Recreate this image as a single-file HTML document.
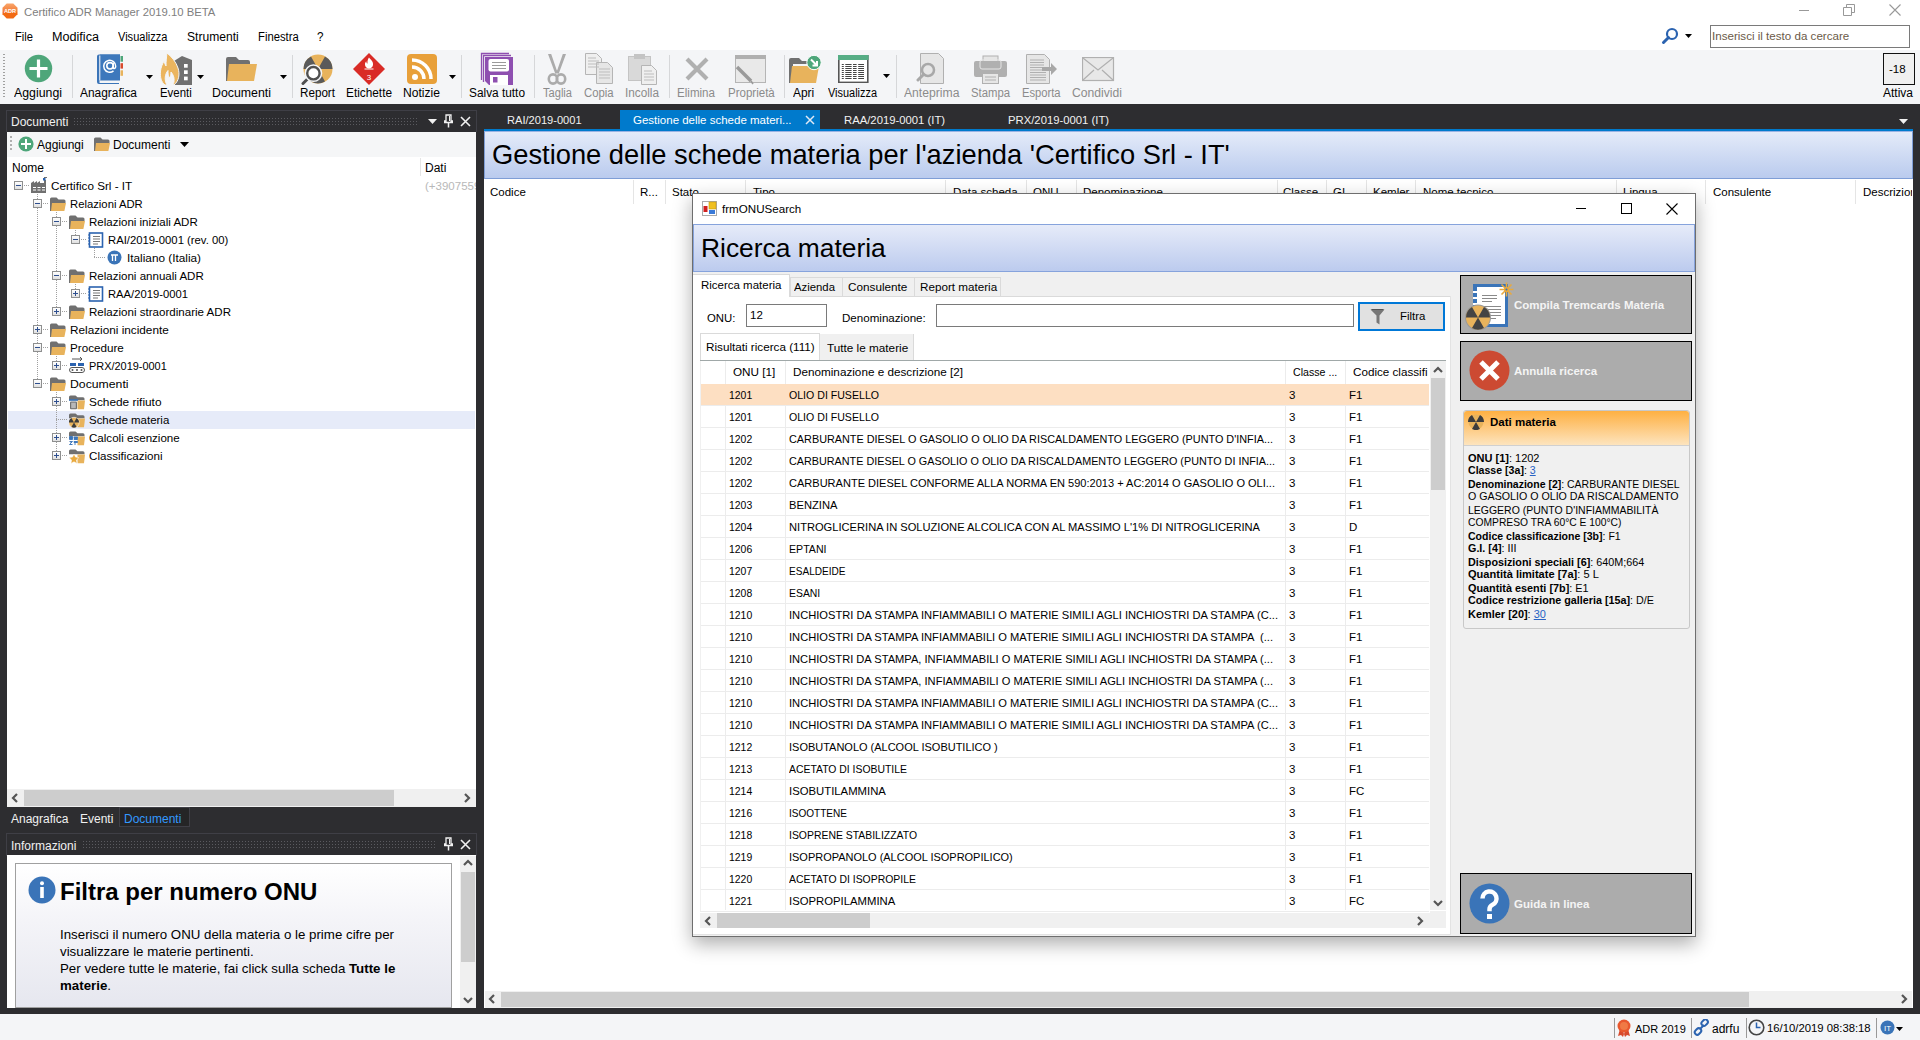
<!DOCTYPE html>
<html><head><meta charset="utf-8"><style>
html,body{margin:0;padding:0;width:1920px;height:1040px;overflow:hidden;background:#fff}
body{position:relative;font-family:"Liberation Sans",sans-serif}
body>div,body>svg{position:absolute}
.t{position:absolute;white-space:pre;line-height:1;font-family:"Liberation Sans",sans-serif}
</style></head><body>
<div style="left:0px;top:0px;width:1920px;height:50px;background:#fff"></div>
<svg style="position:absolute;left:2px;top:3px" width="16" height="16" viewBox="0 0 16 16"><defs><linearGradient id="adrg" x1="0" y1="0" x2="0" y2="1"><stop offset="0" stop-color="#f9a56a"/><stop offset=".55" stop-color="#f27a35"/><stop offset=".56" stop-color="#f26a14"/><stop offset="1" stop-color="#f26a14"/></linearGradient></defs><path d="M4.7 0.5h6.6l4.2 4.2v6.6l-4.2 4.2H4.7L0.5 11.3V4.7z" fill="url(#adrg)"/><text x="8" y="10.3" font-size="5.6" font-family="Liberation Sans" font-weight="700" fill="#fff" text-anchor="middle">ADR</text></svg>
<div class="t" style="left:24px;top:6.96px;font-size:11.3px;color:#808080;">Certifico ADR Manager 2019.10 BETA</div>
<div style="left:1799px;top:10px;width:10px;height:1px;background:#999"></div>
<svg style="position:absolute;left:1843px;top:4px" width="12" height="12" viewBox="0 0 12 12"><path d="M0.5 3.5h8v8h-8z M3.5 3.5v-3h8v8h-3" fill="none" stroke="#999" stroke-width="1"/></svg>
<svg style="position:absolute;left:1889px;top:4px" width="12" height="12" viewBox="0 0 12 12"><path d="M0.5 0.5L11.5 11.5M11.5 0.5L0.5 11.5" stroke="#999" stroke-width="1.1"/></svg>
<div class="t" style="left:15px;top:31.12px;font-size:12px;color:#000;transform:scaleX(0.9305);transform-origin:0 0;">File</div>
<div class="t" style="left:52px;top:31.12px;font-size:12px;color:#000;transform:scaleX(1.0517);transform-origin:0 0;">Modifica</div>
<div class="t" style="left:118px;top:31.12px;font-size:12px;color:#000;transform:scaleX(0.9199);transform-origin:0 0;">Visualizza</div>
<div class="t" style="left:187px;top:31.12px;font-size:12px;color:#000;transform:scaleX(1.0076);transform-origin:0 0;">Strumenti</div>
<div class="t" style="left:258px;top:31.12px;font-size:12px;color:#000;transform:scaleX(0.9398);transform-origin:0 0;">Finestra</div>
<div class="t" style="left:316.5px;top:31.12px;font-size:12px;color:#000;transform:scaleX(0.9720);transform-origin:0 0;">?</div>
<svg style="position:absolute;left:1661px;top:27px" width="18" height="18" viewBox="0 0 18 18"><circle cx="11" cy="7" r="5" fill="none" stroke="#2b63b0" stroke-width="2.2"/><path d="M7.5 10.5L2.5 15.5" stroke="#2b63b0" stroke-width="3" stroke-linecap="round"/></svg>
<svg style="position:absolute;left:1685px;top:34px" width="7" height="4" viewBox="0 0 7 4"><path d="M0 0H7L3.5 4Z" fill="#000"/></svg>
<div style="left:1710px;top:25px;width:200px;height:23px;background:#fff;border:1px solid #7a7a7a;box-sizing:border-box"></div>
<div class="t" style="left:1712px;top:29.52px;font-size:11.6px;color:#6b5a48;">Inserisci il testo da cercare</div>
<div style="left:0px;top:50px;width:1920px;height:54px;background:#f4f5f7"></div>
<div style="left:3px;top:54px;width:2px;height:1px;background:#a0a0a0"></div>
<div style="left:3px;top:57px;width:2px;height:1px;background:#a0a0a0"></div>
<div style="left:3px;top:60px;width:2px;height:1px;background:#a0a0a0"></div>
<div style="left:3px;top:63px;width:2px;height:1px;background:#a0a0a0"></div>
<div style="left:3px;top:66px;width:2px;height:1px;background:#a0a0a0"></div>
<div style="left:3px;top:69px;width:2px;height:1px;background:#a0a0a0"></div>
<div style="left:3px;top:72px;width:2px;height:1px;background:#a0a0a0"></div>
<div style="left:3px;top:75px;width:2px;height:1px;background:#a0a0a0"></div>
<div style="left:3px;top:78px;width:2px;height:1px;background:#a0a0a0"></div>
<div style="left:3px;top:81px;width:2px;height:1px;background:#a0a0a0"></div>
<div style="left:3px;top:84px;width:2px;height:1px;background:#a0a0a0"></div>
<div style="left:3px;top:87px;width:2px;height:1px;background:#a0a0a0"></div>
<div style="left:3px;top:90px;width:2px;height:1px;background:#a0a0a0"></div>
<div style="left:3px;top:93px;width:2px;height:1px;background:#a0a0a0"></div>
<div style="left:3px;top:96px;width:2px;height:1px;background:#a0a0a0"></div>
<div style="left:72px;top:55px;width:1px;height:43px;background:#d6d7d9"></div>
<div style="left:292px;top:55px;width:1px;height:43px;background:#d6d7d9"></div>
<div style="left:461px;top:55px;width:1px;height:43px;background:#d6d7d9"></div>
<div style="left:534px;top:55px;width:1px;height:43px;background:#d6d7d9"></div>
<div style="left:669px;top:55px;width:1px;height:43px;background:#d6d7d9"></div>
<div style="left:784px;top:55px;width:1px;height:43px;background:#d6d7d9"></div>
<div style="left:896px;top:55px;width:1px;height:43px;background:#d6d7d9"></div>
<svg style="position:absolute;left:24px;top:54px" width="29" height="29" viewBox="0 0 29 29"><circle cx="14.5" cy="14.5" r="13.7" fill="#4ea67a"/><path d="M14.5 5.5v18M5.5 14.5h18" stroke="#fff" stroke-width="3.2"/></svg>
<div class="t" style="left:14.25px;top:87.12px;font-size:12px;color:#000;transform:scaleX(1.0274);transform-origin:0 0;">Aggiungi</div>
<svg style="position:absolute;left:96px;top:54px" width="28" height="30" viewBox="0 0 28 30"><path d="M1 2.5a2 2 0 0 1 2-2h21v26H3.5v2.5H23v1H3a2 2 0 0 1-2-2z" fill="#3a74b8"/><rect x="4" y="0.5" width="20" height="25.5" fill="#3d78bc"/><rect x="3.3" y="1.5" width="1" height="25" fill="#fff"/><rect x="24.5" y="2" width="2.5" height="5.7" fill="#4ea67a"/><rect x="24.5" y="9.2" width="2.5" height="5.4" fill="#d84a2d"/><rect x="24.5" y="16.3" width="2.5" height="5.5" fill="#e8b35c"/><circle cx="14" cy="11.8" r="3.2" fill="none" stroke="#fff" stroke-width="1.6"/><path d="M17.2 9v4.5c0 1.5 2.5 1.5 2.5-1.2a6 6 0 1 0-2.2 4.6" fill="none" stroke="#fff" stroke-width="1.5"/></svg>
<div class="t" style="left:80px;top:87.12px;font-size:12px;color:#000;transform:scaleX(0.9935);transform-origin:0 0;">Anagrafica</div>
<svg style="position:absolute;left:146px;top:75px" width="7" height="4" viewBox="0 0 7 4"><path d="M0 0H7L3.5 4Z" fill="#000"/></svg>
<svg style="position:absolute;left:159px;top:52px" width="34" height="34" viewBox="0 0 34 34"><path d="M15 9L23 4L33 8V33H15Z" fill="#707070"/><rect x="25" y="12" width="3.7" height="3.7" fill="#fff"/><rect x="25" y="18.3" width="3.7" height="3.7" fill="#fff"/><rect x="25" y="24.6" width="3.7" height="3.7" fill="#fff"/><path d="M6 33C2 30 1 25 1.5 19C2 15 3.5 12 5 9C5.5 11 6 12.5 7 14C7 9 7.5 5 8 1C13 5 17 10 19 16C21 22 20 29 15 33L14 33C16 29 15.5 24 12 20C12 23 11.5 25 10 26C9 23 9 21 9 18.5C6 22 5 28 8 33Z" fill="#ebb55f" stroke="#f4f5f7" stroke-width="1"/></svg>
<div class="t" style="left:160px;top:87.12px;font-size:12px;color:#000;transform:scaleX(0.9518);transform-origin:0 0;">Eventi</div>
<svg style="position:absolute;left:197px;top:75px" width="7" height="4" viewBox="0 0 7 4"><path d="M0 0H7L3.5 4Z" fill="#000"/></svg>
<svg style="position:absolute;left:226px;top:57px" width="32" height="25" viewBox="0 0 32 25"><path d="M0 3V2a2 2 0 0 1 2-2h8l3 3h9a2 2 0 0 1 2 2v3H0z M0 3h4v21H0z" fill="#707070"/><path d="M3 7h28l-3 17H1z" fill="#e8b35c"/></svg>
<div class="t" style="left:212px;top:87.12px;font-size:12px;color:#000;transform:scaleX(1.0286);transform-origin:0 0;">Documenti</div>
<svg style="position:absolute;left:280px;top:75px" width="7" height="4" viewBox="0 0 7 4"><path d="M0 0H7L3.5 4Z" fill="#000"/></svg>
<svg style="position:absolute;left:301px;top:54px" width="32" height="31" viewBox="0 0 32 31"><circle cx="17" cy="15" r="14.5" fill="#e8b35c"/><path d="M17 15L10 2.5A14.5 14.5 0 0 0 2.5 15z M17 15L24 2.5A14.5 14.5 0 0 1 31.5 15z M17 15l7 12.5a14.5 14.5 0 0 1-14 0z" fill="#5a5a5a"/><path d="M7.5 24L2 29.5" stroke="#505050" stroke-width="3" stroke-linecap="round"/><circle cx="12.4" cy="19.2" r="6.6" fill="#fff" stroke="#f4f5f7" stroke-width="4.6"/><circle cx="12.4" cy="19.2" r="6.2" fill="#fff" stroke="#505050" stroke-width="2.4"/></svg>
<div class="t" style="left:300px;top:87.12px;font-size:12px;color:#000;transform:scaleX(0.9714);transform-origin:0 0;">Report</div>
<svg style="position:absolute;left:353px;top:53px" width="32" height="32" viewBox="0 0 32 32"><path d="M16 0L32 16L16 32L0 16z" fill="#d92b26"/><text x="16" y="27" font-size="8" font-family="Liberation Sans" fill="#fff" text-anchor="middle">3</text><path d="M16 4.5c2 2.5 4.5 4 4 7.5-.4 2.2-2 3.5-4 3.5s-3.6-1.3-4-3.5c-.3-1.8.6-3 1.3-3.8 0 1.5.7 2.3 1.2 2.3-.2-2.5.3-4.4 1.5-6z" fill="#fff"/><path d="M11.5 16h9" stroke="#fff" stroke-width="1"/></svg>
<div class="t" style="left:346px;top:87.12px;font-size:12px;color:#000;transform:scaleX(0.9849);transform-origin:0 0;">Etichette</div>
<svg style="position:absolute;left:407px;top:54px" width="30" height="30" viewBox="0 0 30 30"><rect x="0" y="0" width="30" height="30" rx="4" fill="#e8a03a"/><circle cx="8" cy="23" r="3" fill="#fff"/><path d="M5 13a12 12 0 0 1 12 12M5 6a19 19 0 0 1 19 19" fill="none" stroke="#fff" stroke-width="3.5"/></svg>
<div class="t" style="left:403px;top:87.12px;font-size:12px;color:#000;transform:scaleX(1.0085);transform-origin:0 0;">Notizie</div>
<svg style="position:absolute;left:449px;top:75px" width="7" height="4" viewBox="0 0 7 4"><path d="M0 0H7L3.5 4Z" fill="#000"/></svg>
<svg style="position:absolute;left:480px;top:52px" width="34" height="34" viewBox="0 0 34 34"><path d="M1.5 28V1.5H29" fill="none" stroke="#8e4fb0" stroke-width="1.3"/><path d="M3.5 30V3.5H31" fill="none" stroke="#8e4fb0" stroke-width="1.3"/><path d="M5 5H33V33H9L5 29Z" fill="#8e4fb0"/><rect x="8.5" y="7" width="20.5" height="12.5" rx="2" fill="#fff"/><path d="M12 10.5h14M12 13.5h14M12 16.5h14" stroke="#9a9a9a" stroke-width="1"/><rect x="10" y="23" width="18" height="10" fill="#fff"/><rect x="13" y="25" width="4.5" height="5.5" fill="#8e4fb0"/></svg>
<div class="t" style="left:469px;top:87.12px;font-size:12px;color:#000;transform:scaleX(0.9876);transform-origin:0 0;">Salva tutto</div>
<svg style="position:absolute;left:546px;top:53px" width="22" height="32" viewBox="0 0 22 32"><path d="M2 1h3.2l6 17.5-2 2z M20 1h-3.2l-6 17.5 2 2z" fill="#ababab"/><rect x="9" y="17.5" width="4" height="3" fill="#ababab"/><ellipse cx="7" cy="26" rx="4.2" ry="4.6" fill="none" stroke="#ababab" stroke-width="2.6"/><ellipse cx="15" cy="26" rx="4.2" ry="4.6" fill="none" stroke="#ababab" stroke-width="2.6"/></svg>
<div class="t" style="left:542.5px;top:87.12px;font-size:12px;color:#8b8b8b;transform:scaleX(0.9248);transform-origin:0 0;">Taglia</div>
<svg style="position:absolute;left:585px;top:53px" width="29" height="31" viewBox="0 0 29 31"><path d="M0.5 0.5h11l5 5v16h-16z" fill="#efefef" stroke="#b5b5b5"/><path d="M11.5 9.5h11l5 5v16h-16z" fill="#e6e6e6" stroke="#b5b5b5"/><path d="M3 5h8M3 8h11M3 11h11M3 14h11M14 16h11M14 19h11M14 22h11M14 25h11" stroke="#bdbdbd"/></svg>
<div class="t" style="left:583.6px;top:87.12px;font-size:12px;color:#8b8b8b;transform:scaleX(0.9439);transform-origin:0 0;">Copia</div>
<svg style="position:absolute;left:628px;top:53px" width="30" height="32" viewBox="0 0 30 32"><rect x="0.5" y="3.5" width="22" height="24" fill="#d9d9d9" stroke="#c4c4c4"/><rect x="6" y="1" width="11" height="5" fill="#c4c4c4"/><path d="M13.5 12.5h10l5 5v14h-15z" fill="#efefef" stroke="#b5b5b5"/><path d="M16 18h8M16 21h10M16 24h10M16 27h10" stroke="#bdbdbd"/></svg>
<div class="t" style="left:625.4px;top:87.12px;font-size:12px;color:#8b8b8b;transform:scaleX(0.9802);transform-origin:0 0;">Incolla</div>
<svg style="position:absolute;left:685px;top:57px" width="24" height="24" viewBox="0 0 24 24"><path d="M2 2L22 22M22 2L2 22" stroke="#b0b0b0" stroke-width="4.2"/></svg>
<div class="t" style="left:677.4px;top:87.12px;font-size:12px;color:#8b8b8b;transform:scaleX(0.9655);transform-origin:0 0;">Elimina</div>
<svg style="position:absolute;left:735px;top:55px" width="32" height="30" viewBox="0 0 32 30"><rect x="0.5" y="0.5" width="30" height="27" fill="#e9e9e9" stroke="#b5b5b5"/><rect x="0" y="0" width="31" height="4" fill="#b0b0b0"/><path d="M2 12l14 14" stroke="#9a9a9a" stroke-width="3.5"/><path d="M16 26l2 3" stroke="#9a9a9a" stroke-width="1.5"/></svg>
<div class="t" style="left:727.5px;top:87.12px;font-size:12px;color:#8b8b8b;transform:scaleX(0.9609);transform-origin:0 0;">Proprietà</div>
<svg style="position:absolute;left:789px;top:55px" width="33" height="29" viewBox="0 0 33 29"><path d="M0 6V5a2 2 0 0 1 2-2h8l3 3h8v3H0z M0 6h4v22H0z" fill="#707070"/><path d="M3 11h27l-3 17H1z" fill="#e8b35c"/><circle cx="25" cy="7.5" r="7.2" fill="#4ea67a" stroke="#fff" stroke-width="1"/><path d="M22 4.5l6 6M28 6v4.5h-4.5" fill="none" stroke="#fff" stroke-width="2"/></svg>
<div class="t" style="left:793px;top:87.12px;font-size:12px;color:#000;transform:scaleX(0.9933);transform-origin:0 0;">Apri</div>
<svg style="position:absolute;left:838px;top:55px" width="31" height="28" viewBox="0 0 31 28"><rect x="0.8" y="0.8" width="29" height="26.6" fill="#fff" stroke="#555" stroke-width="1.6"/><rect x="0" y="0" width="30.6" height="5" fill="#56ad85"/><path d="M3.8 9.5h2M7.3 9.5h6.3M15 9.5h3.6M20.2 9.5h5.8" stroke="#444" stroke-width="1.1"/><path d="M3.8 11.5h2M7.3 11.5h6.3M15 11.5h3.6M20.2 11.5h5.8" stroke="#444" stroke-width="1.1"/><path d="M3.8 13.5h2M7.3 13.5h6.3M15 13.5h3.6M20.2 13.5h5.8" stroke="#444" stroke-width="1.1"/><path d="M3.8 15.5h2M7.3 15.5h6.3M15 15.5h3.6M20.2 15.5h5.8" stroke="#444" stroke-width="1.1"/><path d="M3.8 17.5h2M7.3 17.5h6.3M15 17.5h3.6M20.2 17.5h5.8" stroke="#444" stroke-width="1.1"/><path d="M3.8 19.5h2M7.3 19.5h6.3M15 19.5h3.6M20.2 19.5h5.8" stroke="#444" stroke-width="1.1"/><path d="M3.8 21.5h2M7.3 21.5h6.3M15 21.5h3.6M20.2 21.5h5.8" stroke="#444" stroke-width="1.1"/><path d="M3.8 23.5h2M7.3 23.5h6.3M15 23.5h3.6M20.2 23.5h5.8" stroke="#444" stroke-width="1.1"/></svg>
<div class="t" style="left:828.3px;top:87.12px;font-size:12px;color:#000;transform:scaleX(0.9106);transform-origin:0 0;">Visualizza</div>
<svg style="position:absolute;left:883px;top:74px" width="7" height="4" viewBox="0 0 7 4"><path d="M0 0H7L3.5 4Z" fill="#000"/></svg>
<svg style="position:absolute;left:916px;top:53px" width="29" height="31" viewBox="0 0 29 31"><path d="M4.5 0.5h18l5 5v25h-23z" fill="#e6e6e6" stroke="#b0b0b0"/><circle cx="12" cy="17" r="6" fill="#e6e6e6" stroke="#a8a8a8" stroke-width="2.5"/><path d="M7.5 21.5L2 27" stroke="#a8a8a8" stroke-width="3" stroke-linecap="round"/></svg>
<div class="t" style="left:904.3px;top:87.12px;font-size:12px;color:#8b8b8b;transform:scaleX(1.0127);transform-origin:0 0;">Anteprima</div>
<svg style="position:absolute;left:974px;top:55px" width="33" height="29" viewBox="0 0 33 29"><rect x="9" y="1" width="15" height="6" fill="#e6e6e6" stroke="#b0b0b0"/><rect x="0" y="6" width="33" height="16" rx="2" fill="#b0b0b0"/><rect x="6" y="5" width="21" height="9" rx="2" fill="none" stroke="#e6e6e6"/><rect x="8.5" y="18.5" width="16" height="10" fill="#e6e6e6" stroke="#b0b0b0"/><path d="M11 22h11M11 25h11" stroke="#b0b0b0"/></svg>
<div class="t" style="left:971px;top:87.12px;font-size:12px;color:#8b8b8b;transform:scaleX(0.9430);transform-origin:0 0;">Stampa</div>
<svg style="position:absolute;left:1026px;top:54px" width="32" height="30" viewBox="0 0 32 30"><path d="M0.5 0.5h18l5 5v24h-23z" fill="#e6e6e6" stroke="#b0b0b0"/><path d="M4 6.0h14" stroke="#b0b0b0"/><path d="M4 8.5h14" stroke="#b0b0b0"/><path d="M4 11.0h14" stroke="#b0b0b0"/><path d="M4 13.5h14" stroke="#b0b0b0"/><path d="M4 16.0h16" stroke="#b0b0b0"/><path d="M4 18.5h16" stroke="#b0b0b0"/><path d="M4 21.0h16" stroke="#b0b0b0"/><path d="M4 23.5h16" stroke="#b0b0b0"/><path d="M4 26.0h16" stroke="#b0b0b0"/><path d="M16 13h9v-4l6 6-6 6v-4h-9z" fill="#a8a8a8"/></svg>
<div class="t" style="left:1022px;top:87.12px;font-size:12px;color:#8b8b8b;transform:scaleX(0.9333);transform-origin:0 0;">Esporta</div>
<svg style="position:absolute;left:1082px;top:57px" width="33" height="25" viewBox="0 0 33 25"><rect x="0.5" y="0.5" width="31" height="23" fill="#e8e8e8" stroke="#b0b0b0" stroke-width="1.2"/><path d="M1 1l15 12 15-12M1 23l11-10M31 23L20 13" fill="none" stroke="#b0b0b0" stroke-width="1.2"/></svg>
<div class="t" style="left:1072px;top:87.12px;font-size:12px;color:#8b8b8b;transform:scaleX(1.0130);transform-origin:0 0;">Condividi</div>
<div style="left:1883px;top:53px;width:32px;height:32px;background:#f0f0f0;border:1.5px solid #111;box-sizing:border-box"></div>
<div class="t" style="left:1889px;top:64.37px;font-size:11.5px;color:#000;">-18</div>
<div class="t" style="left:1883px;top:87.12px;font-size:12px;color:#000;">Attiva</div>
<div style="left:0px;top:1014px;width:1920px;height:26px;background:#f4f5f7"></div>
<div style="left:1614px;top:1018px;width:1px;height:20px;background:#999"></div>
<div style="left:1691px;top:1018px;width:1px;height:20px;background:#999"></div>
<div style="left:1746px;top:1018px;width:1px;height:20px;background:#999"></div>
<div style="left:1876px;top:1018px;width:1px;height:20px;background:#999"></div>
<svg style="position:absolute;left:1616px;top:1018px" width="16" height="20" viewBox="0 0 16 20"><path d="M4 11l-2 7 3-1 2 2 2-6zM12 11l2 7-3-1-2 2-2-6z" fill="#d84a2d"/><circle cx="8" cy="8" r="6.5" fill="#e8582e"/><circle cx="8" cy="8" r="4" fill="#f07a45"/></svg>
<div class="t" style="left:1635px;top:1023.61px;font-size:11px;color:#000;">ADR 2019</div>
<svg style="position:absolute;left:1693px;top:1019px" width="17" height="17" viewBox="0 0 17 17"><path d="M7 10l4-4" stroke="#2b63b0" stroke-width="2"/><rect x="8.5" y="1" width="7" height="5" rx="2.5" transform="rotate(-45 12 4)" fill="none" stroke="#2b63b0" stroke-width="2"/><rect x="1.5" y="10" width="7" height="5" rx="2.5" transform="rotate(-45 5 12.5)" fill="none" stroke="#2b63b0" stroke-width="2"/></svg>
<div class="t" style="left:1712px;top:1023.12px;font-size:12px;color:#000;">adrfu</div>
<svg style="position:absolute;left:1748px;top:1019px" width="17" height="17" viewBox="0 0 17 17"><circle cx="8.5" cy="8.5" r="7.3" fill="none" stroke="#444" stroke-width="1.6"/><path d="M8.5 3.5v5h4" fill="none" stroke="#2b63b0" stroke-width="1.5"/></svg>
<div class="t" style="left:1767px;top:1023.46px;font-size:11.3px;color:#000;">16/10/2019 08:38:18</div>
<svg style="position:absolute;left:1880px;top:1020px" width="15" height="15" viewBox="0 0 15 15"><circle cx="7.5" cy="7.5" r="7" fill="#3a74b8"/><text x="7.5" y="10.5" font-size="8" font-family="Liberation Sans" fill="#fff" text-anchor="middle">IT</text></svg>
<svg style="position:absolute;left:1896px;top:1027px" width="7" height="4" viewBox="0 0 7 4"><path d="M0 0H7L3.5 4Z" fill="#000"/></svg>
<div style="left:0px;top:104px;width:1920px;height:907px;background:#2d2d30"></div>
<div style="left:6px;top:110px;width:471px;height:22px;background:#2d2d30;border:1px solid #3f3f46;border-bottom:none;box-sizing:border-box"></div>
<div class="t" style="left:11px;top:116.12px;font-size:12px;color:#f1f1f1;">Documenti</div>
<div style="left:73px;top:117px;width:346px;height:9px;background-image:radial-gradient(#5a5a5f 0.55px,transparent 0.65px);background-size:3px 3px"></div>
<svg style="position:absolute;left:428px;top:119px" width="9" height="5" viewBox="0 0 9 5"><path d="M0 0H9L4.5 5Z" fill="#f1f1f1"/></svg>
<svg style="position:absolute;left:444px;top:114px" width="9" height="14" viewBox="0 0 9 14"><path d="M2 1h5v6h1.5v1.5h-8V7H2z" fill="none" stroke="#f1f1f1" stroke-width="1.3"/><path d="M4.5 8.5v5" stroke="#f1f1f1" stroke-width="1.5"/><path d="M5.5 2v5" stroke="#f1f1f1" stroke-width="1"/></svg>
<svg style="position:absolute;left:460px;top:116px" width="11" height="11" viewBox="0 0 11 11"><path d="M1 1L10 10M10 1L1 10" stroke="#f1f1f1" stroke-width="1.6"/></svg>
<div style="left:7px;top:132px;width:469px;height:675px;background:#fff"></div>
<div style="left:7px;top:132px;width:469px;height:25px;background:#f5f6f7"></div>
<div style="left:10px;top:136px;width:2px;height:2px;background:#b0b0b0"></div>
<div style="left:10px;top:140px;width:2px;height:2px;background:#b0b0b0"></div>
<div style="left:10px;top:144px;width:2px;height:2px;background:#b0b0b0"></div>
<div style="left:10px;top:148px;width:2px;height:2px;background:#b0b0b0"></div>
<svg style="position:absolute;left:18px;top:136px" width="16" height="16" viewBox="0 0 16 16"><circle cx="8" cy="8" r="7.6" fill="#4ea67a"/><path d="M8 3v10M3 8h10" stroke="#fff" stroke-width="2"/></svg>
<div class="t" style="left:37px;top:139.12px;font-size:12px;color:#000;">Aggiungi</div>
<svg style="position:absolute;left:94px;top:137px" width="16" height="14" viewBox="0 0 16 14"><path d="M0 3V2a1.5 1.5 0 0 1 1.5-1.5h5l2 2h5.5a1.5 1.5 0 0 1 1.5 1.5v2H0z M0 3h2.5v11H0z" fill="#707070"/><path d="M2 6h14l-1.6 8H1z" fill="#e8b35c"/></svg>
<div class="t" style="left:113px;top:139.12px;font-size:12px;color:#000;">Documenti</div>
<svg style="position:absolute;left:180px;top:142px" width="9" height="5" viewBox="0 0 9 5"><path d="M0 0H9L4.5 5Z" fill="#000"/></svg>
<div class="t" style="left:12px;top:162.12px;font-size:12px;color:#000;">Nome</div>
<div style="left:420px;top:158px;width:1px;height:18px;background:#e5e5e5"></div>
<div class="t" style="left:425px;top:162.12px;font-size:12px;color:#000;">Dati</div>
<div style="left:8px;top:411px;width:467px;height:18px;background:#e6ebf9"></div>
<div style="left:37px;top:194px;width:1px;height:190px;background:repeating-linear-gradient(180deg,#a0a0a0 0 1px,transparent 1px 2px)"></div>
<div style="left:56px;top:212px;width:1px;height:100px;background:repeating-linear-gradient(180deg,#a0a0a0 0 1px,transparent 1px 2px)"></div>
<div style="left:56px;top:356px;width:1px;height:10px;background:repeating-linear-gradient(180deg,#a0a0a0 0 1px,transparent 1px 2px)"></div>
<div style="left:56px;top:392px;width:1px;height:64px;background:repeating-linear-gradient(180deg,#a0a0a0 0 1px,transparent 1px 2px)"></div>
<div style="left:75px;top:230px;width:1px;height:10px;background:repeating-linear-gradient(180deg,#a0a0a0 0 1px,transparent 1px 2px)"></div>
<div style="left:94px;top:248px;width:1px;height:10px;background:repeating-linear-gradient(180deg,#a0a0a0 0 1px,transparent 1px 2px)"></div>
<div style="left:75px;top:284px;width:1px;height:10px;background:repeating-linear-gradient(180deg,#a0a0a0 0 1px,transparent 1px 2px)"></div>
<div style="left:14px;top:181px;width:9px;height:9px;box-sizing:border-box;border:1px solid #8e8f8f;background:linear-gradient(#fff,#e0e0e0)"></div>
<div style="left:16px;top:185px;width:5px;height:1px;background:#2e4f8f"></div>
<div style="left:24px;top:185px;width:6px;height:1px;background:repeating-linear-gradient(90deg,#a0a0a0 0 1px,transparent 1px 2px)"></div>
<svg style="position:absolute;left:31px;top:177px" width="16" height="16" viewBox="0 0 16 16"><path d="M0 6l3-2v2l3-2v2l3-2v2h4V3h2v13H0z" fill="#707070"/><rect x="12" y="1" width="2.5" height="2.5" fill="#2b63b0"/><path d="M13 0.5h3" stroke="#707070"/><path d="M2 10.5h3M6.5 10.5h3M11 10.5h3M2 13h3M6.5 13h3M11 13h3" stroke="#fff" stroke-width="1.2"/></svg>
<div class="t" style="left:51.25px;top:180.72px;font-size:11.8px;color:#000;transform:scaleX(0.9916);transform-origin:0 0;">Certifico Srl - IT</div>
<div style="left:33px;top:199px;width:9px;height:9px;box-sizing:border-box;border:1px solid #8e8f8f;background:linear-gradient(#fff,#e0e0e0)"></div>
<div style="left:35px;top:203px;width:5px;height:1px;background:#2e4f8f"></div>
<div style="left:43px;top:203px;width:6px;height:1px;background:repeating-linear-gradient(90deg,#a0a0a0 0 1px,transparent 1px 2px)"></div>
<svg style="position:absolute;left:50px;top:197px" width="16" height="14" viewBox="0 0 16 14"><path d="M0 3V2a1.5 1.5 0 0 1 1.5-1.5h5l2 2h5.5a1.5 1.5 0 0 1 1.5 1.5v2H0z M0 3h2.5v11H0z" fill="#707070"/><path d="M2 6h14l-1.6 8H1z" fill="#e8b35c"/></svg>
<div class="t" style="left:70.25px;top:198.72px;font-size:11.8px;color:#000;transform:scaleX(0.9565);transform-origin:0 0;">Relazioni ADR</div>
<div style="left:52px;top:217px;width:9px;height:9px;box-sizing:border-box;border:1px solid #8e8f8f;background:linear-gradient(#fff,#e0e0e0)"></div>
<div style="left:54px;top:221px;width:5px;height:1px;background:#2e4f8f"></div>
<div style="left:62px;top:221px;width:6px;height:1px;background:repeating-linear-gradient(90deg,#a0a0a0 0 1px,transparent 1px 2px)"></div>
<svg style="position:absolute;left:69px;top:215px" width="16" height="14" viewBox="0 0 16 14"><path d="M0 3V2a1.5 1.5 0 0 1 1.5-1.5h5l2 2h5.5a1.5 1.5 0 0 1 1.5 1.5v2H0z M0 3h2.5v11H0z" fill="#707070"/><path d="M2 6h14l-1.6 8H1z" fill="#e8b35c"/></svg>
<div class="t" style="left:89.25px;top:216.72px;font-size:11.8px;color:#000;transform:scaleX(0.9756);transform-origin:0 0;">Relazioni iniziali ADR</div>
<div style="left:71px;top:235px;width:9px;height:9px;box-sizing:border-box;border:1px solid #8e8f8f;background:linear-gradient(#fff,#e0e0e0)"></div>
<div style="left:73px;top:239px;width:5px;height:1px;background:#2e4f8f"></div>
<div style="left:81px;top:239px;width:6px;height:1px;background:repeating-linear-gradient(90deg,#a0a0a0 0 1px,transparent 1px 2px)"></div>
<svg style="position:absolute;left:88px;top:232px" width="16" height="16" viewBox="0 0 16 16"><rect x="1.5" y="1" width="13" height="14" fill="#fff" stroke="#2b63b0" stroke-width="1.6"/><path d="M5 4.5h7M5 7h7M5 9.5h7M5 12h5" stroke="#777" stroke-width="1"/><path d="M0 3h2M0 6h2M0 9h2M0 12h2" stroke="#2b63b0" stroke-width="1"/></svg>
<div class="t" style="left:108.25px;top:234.72px;font-size:11.8px;color:#000;transform:scaleX(0.9567);transform-origin:0 0;">RAI/2019-0001 (rev. 00)</div>
<div style="left:94px;top:257px;width:12px;height:1px;background:repeating-linear-gradient(90deg,#a0a0a0 0 1px,transparent 1px 2px)"></div>
<svg style="position:absolute;left:107px;top:250px" width="15" height="15" viewBox="0 0 15 15"><circle cx="7.5" cy="7.5" r="7" fill="#3a74b8"/><path d="M4 5h7M5.5 5v6M8.5 5v6" stroke="#fff" stroke-width="1.3"/></svg>
<div class="t" style="left:127.25px;top:252.72px;font-size:11.8px;color:#000;transform:scaleX(0.9987);transform-origin:0 0;">Italiano (Italia)</div>
<div style="left:52px;top:271px;width:9px;height:9px;box-sizing:border-box;border:1px solid #8e8f8f;background:linear-gradient(#fff,#e0e0e0)"></div>
<div style="left:54px;top:275px;width:5px;height:1px;background:#2e4f8f"></div>
<div style="left:62px;top:275px;width:6px;height:1px;background:repeating-linear-gradient(90deg,#a0a0a0 0 1px,transparent 1px 2px)"></div>
<svg style="position:absolute;left:69px;top:269px" width="16" height="14" viewBox="0 0 16 14"><path d="M0 3V2a1.5 1.5 0 0 1 1.5-1.5h5l2 2h5.5a1.5 1.5 0 0 1 1.5 1.5v2H0z M0 3h2.5v11H0z" fill="#707070"/><path d="M2 6h14l-1.6 8H1z" fill="#e8b35c"/></svg>
<div class="t" style="left:89.25px;top:270.72px;font-size:11.8px;color:#000;transform:scaleX(0.9775);transform-origin:0 0;">Relazioni annuali ADR</div>
<div style="left:71px;top:289px;width:9px;height:9px;box-sizing:border-box;border:1px solid #8e8f8f;background:linear-gradient(#fff,#e0e0e0)"></div>
<div style="left:73px;top:293px;width:5px;height:1px;background:#2e4f8f"></div>
<div style="left:75px;top:291px;width:1px;height:5px;background:#2e4f8f"></div>
<div style="left:81px;top:293px;width:6px;height:1px;background:repeating-linear-gradient(90deg,#a0a0a0 0 1px,transparent 1px 2px)"></div>
<svg style="position:absolute;left:88px;top:286px" width="16" height="16" viewBox="0 0 16 16"><rect x="1.5" y="1" width="13" height="14" fill="#fff" stroke="#2b63b0" stroke-width="1.6"/><path d="M5 4.5h7M5 7h7M5 9.5h7M5 12h5" stroke="#777" stroke-width="1"/><path d="M0 3h2M0 6h2M0 9h2M0 12h2" stroke="#2b63b0" stroke-width="1"/></svg>
<div class="t" style="left:108.25px;top:288.72px;font-size:11.8px;color:#000;transform:scaleX(0.9529);transform-origin:0 0;">RAA/2019-0001</div>
<div style="left:52px;top:307px;width:9px;height:9px;box-sizing:border-box;border:1px solid #8e8f8f;background:linear-gradient(#fff,#e0e0e0)"></div>
<div style="left:54px;top:311px;width:5px;height:1px;background:#2e4f8f"></div>
<div style="left:56px;top:309px;width:1px;height:5px;background:#2e4f8f"></div>
<div style="left:62px;top:311px;width:6px;height:1px;background:repeating-linear-gradient(90deg,#a0a0a0 0 1px,transparent 1px 2px)"></div>
<svg style="position:absolute;left:69px;top:305px" width="16" height="14" viewBox="0 0 16 14"><path d="M0 3V2a1.5 1.5 0 0 1 1.5-1.5h5l2 2h5.5a1.5 1.5 0 0 1 1.5 1.5v2H0z M0 3h2.5v11H0z" fill="#707070"/><path d="M2 6h14l-1.6 8H1z" fill="#e8b35c"/></svg>
<div class="t" style="left:89.25px;top:306.72px;font-size:11.8px;color:#000;transform:scaleX(0.9799);transform-origin:0 0;">Relazioni straordinarie ADR</div>
<div style="left:33px;top:325px;width:9px;height:9px;box-sizing:border-box;border:1px solid #8e8f8f;background:linear-gradient(#fff,#e0e0e0)"></div>
<div style="left:35px;top:329px;width:5px;height:1px;background:#2e4f8f"></div>
<div style="left:37px;top:327px;width:1px;height:5px;background:#2e4f8f"></div>
<div style="left:43px;top:329px;width:6px;height:1px;background:repeating-linear-gradient(90deg,#a0a0a0 0 1px,transparent 1px 2px)"></div>
<svg style="position:absolute;left:50px;top:323px" width="16" height="14" viewBox="0 0 16 14"><path d="M0 3V2a1.5 1.5 0 0 1 1.5-1.5h5l2 2h5.5a1.5 1.5 0 0 1 1.5 1.5v2H0z M0 3h2.5v11H0z" fill="#707070"/><path d="M2 6h14l-1.6 8H1z" fill="#e8b35c"/></svg>
<div class="t" style="left:70.25px;top:324.72px;font-size:11.8px;color:#000;transform:scaleX(0.9972);transform-origin:0 0;">Relazioni incidente</div>
<div style="left:33px;top:343px;width:9px;height:9px;box-sizing:border-box;border:1px solid #8e8f8f;background:linear-gradient(#fff,#e0e0e0)"></div>
<div style="left:35px;top:347px;width:5px;height:1px;background:#2e4f8f"></div>
<div style="left:43px;top:347px;width:6px;height:1px;background:repeating-linear-gradient(90deg,#a0a0a0 0 1px,transparent 1px 2px)"></div>
<svg style="position:absolute;left:50px;top:341px" width="16" height="14" viewBox="0 0 16 14"><path d="M0 3V2a1.5 1.5 0 0 1 1.5-1.5h5l2 2h5.5a1.5 1.5 0 0 1 1.5 1.5v2H0z M0 3h2.5v11H0z" fill="#707070"/><path d="M2 6h14l-1.6 8H1z" fill="#e8b35c"/></svg>
<div class="t" style="left:70.25px;top:342.72px;font-size:11.8px;color:#000;transform:scaleX(0.9874);transform-origin:0 0;">Procedure</div>
<div style="left:52px;top:361px;width:9px;height:9px;box-sizing:border-box;border:1px solid #8e8f8f;background:linear-gradient(#fff,#e0e0e0)"></div>
<div style="left:54px;top:365px;width:5px;height:1px;background:#2e4f8f"></div>
<div style="left:56px;top:363px;width:1px;height:5px;background:#2e4f8f"></div>
<div style="left:62px;top:365px;width:6px;height:1px;background:repeating-linear-gradient(90deg,#a0a0a0 0 1px,transparent 1px 2px)"></div>
<svg style="position:absolute;left:69px;top:357px" width="16" height="16" viewBox="0 0 16 16"><path d="M3 2h10M11 0l2 2-2 2" fill="none" stroke="#555" stroke-width="1"/><rect x="1" y="6" width="6" height="3" fill="#2b63b0"/><rect x="9" y="6" width="6" height="3" fill="#2b63b0"/><rect x="0.5" y="10.5" width="15" height="5" rx="2.5" fill="none" stroke="#555"/><circle cx="3.5" cy="13" r="1" fill="#555"/><circle cx="8" cy="13" r="1" fill="#555"/><circle cx="12.5" cy="13" r="1" fill="#555"/></svg>
<div class="t" style="left:89.25px;top:360.72px;font-size:11.8px;color:#000;transform:scaleX(0.9261);transform-origin:0 0;">PRX/2019-0001</div>
<div style="left:33px;top:379px;width:9px;height:9px;box-sizing:border-box;border:1px solid #8e8f8f;background:linear-gradient(#fff,#e0e0e0)"></div>
<div style="left:35px;top:383px;width:5px;height:1px;background:#2e4f8f"></div>
<div style="left:43px;top:383px;width:6px;height:1px;background:repeating-linear-gradient(90deg,#a0a0a0 0 1px,transparent 1px 2px)"></div>
<svg style="position:absolute;left:50px;top:377px" width="16" height="14" viewBox="0 0 16 14"><path d="M0 3V2a1.5 1.5 0 0 1 1.5-1.5h5l2 2h5.5a1.5 1.5 0 0 1 1.5 1.5v2H0z M0 3h2.5v11H0z" fill="#707070"/><path d="M2 6h14l-1.6 8H1z" fill="#e8b35c"/></svg>
<div class="t" style="left:70.25px;top:378.72px;font-size:11.8px;color:#000;transform:scaleX(1.0374);transform-origin:0 0;">Documenti</div>
<div style="left:52px;top:397px;width:9px;height:9px;box-sizing:border-box;border:1px solid #8e8f8f;background:linear-gradient(#fff,#e0e0e0)"></div>
<div style="left:54px;top:401px;width:5px;height:1px;background:#2e4f8f"></div>
<div style="left:56px;top:399px;width:1px;height:5px;background:#2e4f8f"></div>
<div style="left:62px;top:401px;width:6px;height:1px;background:repeating-linear-gradient(90deg,#a0a0a0 0 1px,transparent 1px 2px)"></div>
<svg style="position:absolute;left:69px;top:395px" width="16" height="16" viewBox="0 0 16 16"><path d="M0 2a1.5 1.5 0 0 1 1.5-1.5h5l2 1.8h5.5a1.5 1.5 0 0 1 1.5 1.5v1.5H0z" fill="#707070"/><path d="M8.5 5.5h7.5l-1 8.8H8.5z" fill="#e8b35c"/><rect x="0" y="4.2" width="9" height="1.6" fill="#3a74b8"/><rect x="1" y="6.5" width="7" height="7.8" rx="1" fill="#707070"/><rect x="2.2" y="7.6" width="4.6" height="5.6" fill="#b8b8b8"/></svg>
<div class="t" style="left:89.25px;top:396.72px;font-size:11.8px;color:#000;transform:scaleX(1.0050);transform-origin:0 0;">Schede rifiuto</div>
<div style="left:56px;top:419px;width:12px;height:1px;background:repeating-linear-gradient(90deg,#a0a0a0 0 1px,transparent 1px 2px)"></div>
<svg style="position:absolute;left:69px;top:413px" width="16" height="16" viewBox="0 0 16 16"><path d="M0 2a1.5 1.5 0 0 1 1.5-1.5h5l2 1.8h5.5a1.5 1.5 0 0 1 1.5 1.5v1.5H0z" fill="#707070"/><path d="M8.5 5.5h7.5l-1 8.8H8.5z" fill="#e8b35c"/><circle cx="5" cy="9.5" r="5.2" fill="#e8b35c" stroke="#fff" stroke-width=".6"/><path d="M5 9.5L2.4 5A5.2 5.2 0 0 0 -0.2 9.5zM5 9.5L7.6 5A5.2 5.2 0 0 1 10.2 9.5zM5 9.5l2.6 4.5a5.2 5.2 0 0 1-5.2 0z" fill="#3c3c3c"/></svg>
<div class="t" style="left:89.25px;top:414.72px;font-size:11.8px;color:#000;transform:scaleX(0.9713);transform-origin:0 0;">Schede materia</div>
<div style="left:52px;top:433px;width:9px;height:9px;box-sizing:border-box;border:1px solid #8e8f8f;background:linear-gradient(#fff,#e0e0e0)"></div>
<div style="left:54px;top:437px;width:5px;height:1px;background:#2e4f8f"></div>
<div style="left:56px;top:435px;width:1px;height:5px;background:#2e4f8f"></div>
<div style="left:62px;top:437px;width:6px;height:1px;background:repeating-linear-gradient(90deg,#a0a0a0 0 1px,transparent 1px 2px)"></div>
<svg style="position:absolute;left:69px;top:431px" width="16" height="16" viewBox="0 0 16 16"><path d="M0 2a1.5 1.5 0 0 1 1.5-1.5h5l2 1.8h5.5a1.5 1.5 0 0 1 1.5 1.5v1.5H0z" fill="#707070"/><path d="M8.5 5.5h7.5l-1 8.8H8.5z" fill="#e8b35c"/><path d="M0.5 5.5h3v3h-3zM5 6h3.5v1H5zM5 7.5h3.5v1H5zM0.5 10.5h3l-3 3h3M5 10.5h3.5v1H5zM6 11.5v2.5" fill="#3a74b8" stroke="#3a74b8" stroke-width=".9"/></svg>
<div class="t" style="left:89.25px;top:432.72px;font-size:11.8px;color:#000;transform:scaleX(0.9814);transform-origin:0 0;">Calcoli esenzione</div>
<div style="left:52px;top:451px;width:9px;height:9px;box-sizing:border-box;border:1px solid #8e8f8f;background:linear-gradient(#fff,#e0e0e0)"></div>
<div style="left:54px;top:455px;width:5px;height:1px;background:#2e4f8f"></div>
<div style="left:56px;top:453px;width:1px;height:5px;background:#2e4f8f"></div>
<div style="left:62px;top:455px;width:6px;height:1px;background:repeating-linear-gradient(90deg,#a0a0a0 0 1px,transparent 1px 2px)"></div>
<svg style="position:absolute;left:69px;top:449px" width="16" height="16" viewBox="0 0 16 16"><path d="M0 2a1.5 1.5 0 0 1 1.5-1.5h5l2 1.8h5.5a1.5 1.5 0 0 1 1.5 1.5v1.5H0z" fill="#707070"/><path d="M8.5 5.5h7.5l-1 8.8H8.5z" fill="#e8b35c"/><path d="M5 5l1.5 3.1 3.4.5-2.5 2.4.6 3.4L5 12.8l-3 1.6.6-3.4L0.1 8.6l3.4-.5z" fill="#e8a93e" stroke="#fff" stroke-width=".5"/></svg>
<div class="t" style="left:89.25px;top:450.72px;font-size:11.8px;color:#000;transform:scaleX(0.9833);transform-origin:0 0;">Classificazioni</div>
<div class="t" style="left:425px;top:180.87px;font-size:11.5px;color:#b8b8b8;width:51px;overflow:hidden;">(+3907559</div>
<div style="left:7px;top:789px;width:469px;height:18px;background:#f0f0f0"></div>
<div style="left:24px;top:790px;width:370px;height:16px;background:#cdcdcd"></div>
<svg style="position:absolute;left:11px;top:793px" width="8" height="10" viewBox="0 0 8 10"><path d="M6 1L2 5l4 4" fill="none" stroke="#555" stroke-width="2.2"/></svg>
<svg style="position:absolute;left:463px;top:793px" width="8" height="10" viewBox="0 0 8 10"><path d="M2 1l4 4-4 4" fill="none" stroke="#555" stroke-width="2.2"/></svg>
<div class="t" style="left:11px;top:813.12px;font-size:12px;color:#f1f1f1;">Anagrafica</div>
<div class="t" style="left:80px;top:813.12px;font-size:12px;color:#f1f1f1;">Eventi</div>
<div style="left:119px;top:807px;width:71px;height:20px;background:#252526;border:1px solid #3f3f46;box-sizing:border-box"></div>
<div class="t" style="left:124px;top:813.12px;font-size:12px;color:#3399ff;">Documenti</div>
<div style="left:6px;top:833px;width:471px;height:23px;background:#2d2d30;border:1px solid #3f3f46;border-bottom:none;box-sizing:border-box"></div>
<div class="t" style="left:11px;top:840.12px;font-size:12px;color:#f1f1f1;">Informazioni</div>
<div style="left:82px;top:840px;width:354px;height:9px;background-image:radial-gradient(#5a5a5f 0.55px,transparent 0.65px);background-size:3px 3px"></div>
<svg style="position:absolute;left:444px;top:837px" width="9" height="14" viewBox="0 0 9 14"><path d="M2 1h5v6h1.5v1.5h-8V7H2z" fill="none" stroke="#f1f1f1" stroke-width="1.3"/><path d="M4.5 8.5v5" stroke="#f1f1f1" stroke-width="1.5"/><path d="M5.5 2v5" stroke="#f1f1f1" stroke-width="1"/></svg>
<svg style="position:absolute;left:460px;top:839px" width="11" height="11" viewBox="0 0 11 11"><path d="M1 1L10 10M10 1L1 10" stroke="#f1f1f1" stroke-width="1.6"/></svg>
<div style="left:7px;top:855px;width:469px;height:153px;background:#fff"></div>
<div style="left:15px;top:863px;width:437px;height:145px;border-bottom:none;box-sizing:border-box;border:1px solid #a0a0a0;background:linear-gradient(#fff 0%,#f4f4f8 40%,#e6e7ef 100%)"></div>
<div style="left:460px;top:856px;width:16px;height:152px;background:#f0f0f0"></div>
<div style="left:461px;top:872px;width:14px;height:90px;background:#cdcdcd"></div>
<svg style="position:absolute;left:463px;top:859px" width="10" height="8" viewBox="0 0 10 8"><path d="M1 6l4-4 4 4" fill="none" stroke="#555" stroke-width="2.2"/></svg>
<svg style="position:absolute;left:463px;top:996px" width="10" height="8" viewBox="0 0 10 8"><path d="M1 2l4 4 4-4" fill="none" stroke="#555" stroke-width="2.2"/></svg>
<svg style="position:absolute;left:28px;top:876px" width="28" height="28" viewBox="0 0 28 28"><circle cx="14" cy="14" r="13.5" fill="#3a74b8"/><rect x="12.2" y="11" width="3.6" height="11" fill="#fff"/><circle cx="14" cy="7.3" r="2" fill="#fff"/></svg>
<div class="t" style="left:60px;top:880.24px;font-size:24px;color:#000;font-weight:700;">Filtra per numero ONU</div>
<div class="t" style="left:60px;top:927.98px;font-size:13.3px;color:#000;">Inserisci il numero ONU della materia o le prime cifre per</div>
<div class="t" style="left:60px;top:944.98px;font-size:13.3px;color:#000;">visualizzare le materie pertinenti.</div>
<div class="t" style="left:60px;top:961.98px;font-size:13.3px;color:#000;">Per vedere tutte le materie, fai click sulla scheda <b>Tutte le</b></div>
<div class="t" style="left:60px;top:978.98px;font-size:13.3px;color:#000;"><b>materie</b>.</div>
<div style="left:0px;top:1008px;width:1920px;height:6px;background:#2d2d30"></div>
<div class="t" style="left:507px;top:115.06px;font-size:11.1px;color:#f1f1f1;">RAI/2019-0001</div>
<div style="left:620px;top:110px;width:200px;height:19px;background:#007acc"></div>
<div class="t" style="left:633px;top:114.86px;font-size:11.5px;color:#fff;">Gestione delle schede materi...</div>
<svg style="position:absolute;left:805px;top:115px" width="10" height="10" viewBox="0 0 10 10"><path d="M1 1L9 9M9 1L1 9" stroke="#dfe9f5" stroke-width="1.5"/></svg>
<div class="t" style="left:844px;top:114.96px;font-size:11.3px;color:#f1f1f1;">RAA/2019-0001 (IT)</div>
<div class="t" style="left:1008px;top:114.96px;font-size:11.3px;color:#f1f1f1;">PRX/2019-0001 (IT)</div>
<svg style="position:absolute;left:1899px;top:119px" width="9" height="5" viewBox="0 0 9 5"><path d="M0 0H9L4.5 5Z" fill="#f1f1f1"/></svg>
<div style="left:484px;top:129px;width:1429px;height:2px;background:#007acc"></div>
<div style="left:484px;top:131px;width:1429px;height:877px;background:#fff"></div>
<div style="left:484px;top:131px;width:1429px;height:48px;box-sizing:border-box;border:1px solid #7f9ed6;border-top-color:#9ab3e3;background:linear-gradient(#e4ebf9,#bacbee)"></div>
<div class="t" style="left:492px;top:140.62px;font-size:27.3px;color:#000;">Gestione delle schede materia per l'azienda 'Certifico Srl - IT'</div>
<div style="left:485px;top:179px;width:1427px;height:26px;background:#fff"></div>
<div class="t" style="left:490px;top:186.87px;font-size:11.5px;color:#000;">Codice</div>
<div class="t" style="left:640px;top:186.87px;font-size:11.5px;color:#000;">R...</div>
<div class="t" style="left:672px;top:186.87px;font-size:11.5px;color:#000;">Stato</div>
<div class="t" style="left:753px;top:186.87px;font-size:11.5px;color:#000;">Tipo</div>
<div class="t" style="left:953px;top:186.87px;font-size:11.5px;color:#000;">Data scheda</div>
<div class="t" style="left:1033px;top:186.87px;font-size:11.5px;color:#000;">ONU</div>
<div class="t" style="left:1083px;top:186.87px;font-size:11.5px;color:#000;">Denominazione</div>
<div class="t" style="left:1283px;top:186.87px;font-size:11.5px;color:#000;">Classe</div>
<div class="t" style="left:1333px;top:186.87px;font-size:11.5px;color:#000;">GI</div>
<div class="t" style="left:1373px;top:186.87px;font-size:11.5px;color:#000;">Kemler</div>
<div class="t" style="left:1423px;top:186.87px;font-size:11.5px;color:#000;">Nome tecnico</div>
<div class="t" style="left:1623px;top:186.87px;font-size:11.5px;color:#000;">Lingua</div>
<div class="t" style="left:1713px;top:186.87px;font-size:11.5px;color:#000;">Consulente</div>
<div class="t" style="left:1863px;top:186.87px;font-size:11.5px;color:#000;width:49px;overflow:hidden;">Descrizion</div>
<div style="left:633px;top:180px;width:1px;height:24px;background:#e5e5e5"></div>
<div style="left:665px;top:180px;width:1px;height:24px;background:#e5e5e5"></div>
<div style="left:745px;top:180px;width:1px;height:24px;background:#e5e5e5"></div>
<div style="left:945px;top:180px;width:1px;height:24px;background:#e5e5e5"></div>
<div style="left:1026px;top:180px;width:1px;height:24px;background:#e5e5e5"></div>
<div style="left:1076px;top:180px;width:1px;height:24px;background:#e5e5e5"></div>
<div style="left:1277px;top:180px;width:1px;height:24px;background:#e5e5e5"></div>
<div style="left:1326px;top:180px;width:1px;height:24px;background:#e5e5e5"></div>
<div style="left:1366px;top:180px;width:1px;height:24px;background:#e5e5e5"></div>
<div style="left:1415px;top:180px;width:1px;height:24px;background:#e5e5e5"></div>
<div style="left:1616px;top:180px;width:1px;height:24px;background:#e5e5e5"></div>
<div style="left:1705px;top:180px;width:1px;height:24px;background:#e5e5e5"></div>
<div style="left:1855px;top:180px;width:1px;height:24px;background:#e5e5e5"></div>
<div style="left:485px;top:991px;width:1427px;height:17px;background:#f0f0f0"></div>
<div style="left:501px;top:992px;width:1248px;height:15px;background:#cdcdcd"></div>
<svg style="position:absolute;left:488px;top:994px" width="8" height="10" viewBox="0 0 8 10"><path d="M6 1L2 5l4 4" fill="none" stroke="#555" stroke-width="2.2"/></svg>
<svg style="position:absolute;left:1900px;top:994px" width="8" height="10" viewBox="0 0 8 10"><path d="M2 1l4 4-4 4" fill="none" stroke="#555" stroke-width="2.2"/></svg>
<div style="left:692px;top:193px;width:1004px;height:744px;box-shadow:0 7px 18px 0 rgba(0,0,0,.32)"></div>
<div style="left:692px;top:193px;width:1004px;height:744px;box-sizing:border-box;border:1px solid #6e6e6e;background:#f0f0f0"></div>
<div style="left:693px;top:194px;width:1002px;height:30px;background:#fff"></div>
<svg style="position:absolute;left:702px;top:201px" width="15" height="15" viewBox="0 0 15 15"><rect x="0.5" y="0.5" width="14" height="14" fill="#fff" stroke="#aaa"/><rect x="7" y="1" width="7" height="7" fill="#f0c020" stroke="#c89a10" stroke-width=".6"/><rect x="1.5" y="5" width="4" height="6" fill="#d02020"/><rect x="7" y="9" width="6" height="4" fill="#3a7ad8"/></svg>
<div class="t" style="left:722px;top:202.82px;font-size:11.6px;color:#000;">frmONUSearch</div>
<div style="left:1576px;top:208px;width:10px;height:1px;background:#000"></div>
<div style="left:1621px;top:203px;width:11px;height:11px;border:1px solid #000;box-sizing:border-box"></div>
<svg style="position:absolute;left:1666px;top:203px" width="12" height="12" viewBox="0 0 12 12"><path d="M0.5 0.5L11.5 11.5M11.5 0.5L0.5 11.5" stroke="#000" stroke-width="1.1"/></svg>
<div style="left:693px;top:224px;width:1002px;height:48px;box-sizing:border-box;border:1px solid #86a3dc;background:linear-gradient(#e6ebf9,#bccbee)"></div>
<div class="t" style="left:701px;top:234.56px;font-size:26.4px;color:#000;">Ricerca materia</div>
<div style="left:693px;top:296px;width:758px;height:639px;background:#fff"></div>
<div style="left:693px;top:296px;width:758px;height:1px;background:#dadada"></div>
<div style="left:1450px;top:296px;width:1px;height:639px;background:#e3e3e3"></div>
<div style="left:693px;top:934px;width:758px;height:1px;background:#e3e3e3"></div>
<div style="left:693px;top:274px;width:97px;height:23px;box-sizing:border-box;border:1px solid #dadada;border-bottom:none;border-left:none;background:#fff"></div>
<div class="t" style="left:701px;top:280.22px;font-size:11.8px;color:#000;transform:scaleX(0.9733);transform-origin:0 0;">Ricerca materia</div>
<div style="left:790px;top:277px;width:53px;height:19px;box-sizing:border-box;border:1px solid #dadada;border-bottom:none;background:#f0f0f0"></div>
<div class="t" style="left:794.4px;top:282.22px;font-size:11.8px;color:#000;transform:scaleX(0.9615);transform-origin:0 0;">Azienda</div>
<div style="left:842px;top:277px;width:73px;height:19px;box-sizing:border-box;border:1px solid #dadada;border-bottom:none;background:#f0f0f0"></div>
<div class="t" style="left:848.4px;top:282.22px;font-size:11.8px;color:#000;transform:scaleX(0.9952);transform-origin:0 0;">Consulente</div>
<div style="left:914px;top:277px;width:87px;height:19px;box-sizing:border-box;border:1px solid #dadada;border-bottom:none;background:#f0f0f0"></div>
<div class="t" style="left:920.3px;top:282.22px;font-size:11.8px;color:#000;transform:scaleX(0.9893);transform-origin:0 0;">Report materia</div>
<div class="t" style="left:707.25px;top:312.72px;font-size:11.8px;color:#000;transform:scaleX(0.9627);transform-origin:0 0;">ONU:</div>
<div style="left:746px;top:304px;width:81px;height:23px;background:#fff;border:1px solid #7a7a7a;box-sizing:border-box"></div>
<div class="t" style="left:750px;top:309.87px;font-size:11.5px;color:#000;">12</div>
<div class="t" style="left:841.5px;top:312.72px;font-size:11.8px;color:#000;transform:scaleX(0.9822);transform-origin:0 0;">Denominazione:</div>
<div style="left:936px;top:304px;width:418px;height:23px;background:#fff;border:1px solid #7a7a7a;box-sizing:border-box"></div>
<div style="left:1358px;top:302px;width:87px;height:29px;box-sizing:border-box;border:2px solid #0078d7;background:#e1e1e1"></div>
<svg style="position:absolute;left:1370px;top:308px" width="16" height="17" viewBox="0 0 16 17"><path d="M0.5 1.5h14l-5 6v9l-3-2v-7z" fill="#777"/><path d="M1.5 1.5h12" stroke="#555"/></svg>
<div class="t" style="left:1400.3px;top:311.22px;font-size:11.8px;color:#000;transform:scaleX(0.9688);transform-origin:0 0;">Filtra</div>
<div style="left:700px;top:333px;width:120px;height:29px;box-sizing:border-box;border:1px solid #dadada;border-bottom:none;background:#fff"></div>
<div class="t" style="left:706.25px;top:342.22px;font-size:11.8px;color:#000;transform:scaleX(0.9913);transform-origin:0 0;">Risultati ricerca (111)</div>
<div style="left:820px;top:334px;width:94px;height:26px;background:#f0f0f0;border-right:1px solid #dadada;box-sizing:border-box"></div>
<div class="t" style="left:826.6px;top:343.22px;font-size:11.8px;color:#000;transform:scaleX(0.9959);transform-origin:0 0;">Tutte le materie</div>
<div style="left:700px;top:360px;width:746px;height:1px;background:#a0a8a8"></div>
<div style="left:700px;top:361px;width:746px;height:567px;background:#fff"></div>
<div style="left:725px;top:361px;width:1px;height:549px;background:#ececec"></div>
<div style="left:785px;top:361px;width:1px;height:549px;background:#ececec"></div>
<div style="left:1285px;top:361px;width:1px;height:549px;background:#ececec"></div>
<div style="left:1345px;top:361px;width:1px;height:549px;background:#ececec"></div>
<div class="t" style="left:733.2px;top:367.22px;font-size:11.8px;color:#000;transform:scaleX(0.9927);transform-origin:0 0;">ONU [1]</div>
<div class="t" style="left:793.4px;top:367.22px;font-size:11.8px;color:#000;transform:scaleX(0.9932);transform-origin:0 0;">Denominazione e descrizione [2]</div>
<div class="t" style="left:1293.4px;top:367.22px;font-size:11.8px;color:#000;transform:scaleX(0.9009);transform-origin:0 0;">Classe ...</div>
<div class="t" style="left:1353.3px;top:367.22px;font-size:11.8px;color:#000;transform:scaleX(0.9880);transform-origin:0 0;">Codice classifi</div>
<div style="left:700px;top:384px;width:729px;height:21px;background:#fddfc2"></div>
<div style="left:700px;top:405px;width:729px;height:1px;background:#ececec"></div>
<div class="t" style="left:728.8px;top:389.87px;font-size:11.5px;color:#000;transform:scaleX(0.9065);transform-origin:0 0;">1201</div>
<div class="t" style="left:789px;top:389.87px;font-size:11.5px;color:#000;transform:scaleX(0.9204);transform-origin:0 0;">OLIO DI FUSELLO</div>
<div class="t" style="left:1289px;top:389.87px;font-size:11.5px;color:#000;">3</div>
<div class="t" style="left:1349px;top:389.87px;font-size:11.5px;color:#000;">F1</div>
<div style="left:700px;top:427px;width:729px;height:1px;background:#ececec"></div>
<div class="t" style="left:728.8px;top:411.87px;font-size:11.5px;color:#000;transform:scaleX(0.9065);transform-origin:0 0;">1201</div>
<div class="t" style="left:789px;top:411.87px;font-size:11.5px;color:#000;transform:scaleX(0.9204);transform-origin:0 0;">OLIO DI FUSELLO</div>
<div class="t" style="left:1289px;top:411.87px;font-size:11.5px;color:#000;">3</div>
<div class="t" style="left:1349px;top:411.87px;font-size:11.5px;color:#000;">F1</div>
<div style="left:700px;top:449px;width:729px;height:1px;background:#ececec"></div>
<div class="t" style="left:728.8px;top:433.87px;font-size:11.5px;color:#000;transform:scaleX(0.9065);transform-origin:0 0;">1202</div>
<div class="t" style="left:789px;top:433.87px;font-size:11.5px;color:#000;transform:scaleX(0.9431);transform-origin:0 0;">CARBURANTE DIESEL O GASOLIO O OLIO DA RISCALDAMENTO LEGGERO (PUNTO D'INFIA...</div>
<div class="t" style="left:1289px;top:433.87px;font-size:11.5px;color:#000;">3</div>
<div class="t" style="left:1349px;top:433.87px;font-size:11.5px;color:#000;">F1</div>
<div style="left:700px;top:471px;width:729px;height:1px;background:#ececec"></div>
<div class="t" style="left:728.8px;top:455.87px;font-size:11.5px;color:#000;transform:scaleX(0.9065);transform-origin:0 0;">1202</div>
<div class="t" style="left:789px;top:455.87px;font-size:11.5px;color:#000;transform:scaleX(0.9393);transform-origin:0 0;">CARBURANTE DIESEL O GASOLIO O OLIO DA RISCALDAMENTO LEGGERO (PUNTO DI INFIA...</div>
<div class="t" style="left:1289px;top:455.87px;font-size:11.5px;color:#000;">3</div>
<div class="t" style="left:1349px;top:455.87px;font-size:11.5px;color:#000;">F1</div>
<div style="left:700px;top:493px;width:729px;height:1px;background:#ececec"></div>
<div class="t" style="left:728.8px;top:477.87px;font-size:11.5px;color:#000;transform:scaleX(0.9065);transform-origin:0 0;">1202</div>
<div class="t" style="left:789px;top:477.87px;font-size:11.5px;color:#000;transform:scaleX(0.9591);transform-origin:0 0;">CARBURANTE DIESEL CONFORME ALLA NORMA EN 590:2013 + AC:2014 O GASOLIO O OLI...</div>
<div class="t" style="left:1289px;top:477.87px;font-size:11.5px;color:#000;">3</div>
<div class="t" style="left:1349px;top:477.87px;font-size:11.5px;color:#000;">F1</div>
<div style="left:700px;top:515px;width:729px;height:1px;background:#ececec"></div>
<div class="t" style="left:728.8px;top:499.87px;font-size:11.5px;color:#000;transform:scaleX(0.9065);transform-origin:0 0;">1203</div>
<div class="t" style="left:789px;top:499.87px;font-size:11.5px;color:#000;transform:scaleX(0.9710);transform-origin:0 0;">BENZINA</div>
<div class="t" style="left:1289px;top:499.87px;font-size:11.5px;color:#000;">3</div>
<div class="t" style="left:1349px;top:499.87px;font-size:11.5px;color:#000;">F1</div>
<div style="left:700px;top:537px;width:729px;height:1px;background:#ececec"></div>
<div class="t" style="left:728.8px;top:521.87px;font-size:11.5px;color:#000;transform:scaleX(0.9065);transform-origin:0 0;">1204</div>
<div class="t" style="left:789px;top:521.87px;font-size:11.5px;color:#000;transform:scaleX(0.9675);transform-origin:0 0;">NITROGLICERINA IN SOLUZIONE ALCOLICA CON AL MASSIMO L'1% DI NITROGLICERINA</div>
<div class="t" style="left:1289px;top:521.87px;font-size:11.5px;color:#000;">3</div>
<div class="t" style="left:1349px;top:521.87px;font-size:11.5px;color:#000;">D</div>
<div style="left:700px;top:559px;width:729px;height:1px;background:#ececec"></div>
<div class="t" style="left:728.8px;top:543.87px;font-size:11.5px;color:#000;transform:scaleX(0.9065);transform-origin:0 0;">1206</div>
<div class="t" style="left:789px;top:543.87px;font-size:11.5px;color:#000;transform:scaleX(0.9217);transform-origin:0 0;">EPTANI</div>
<div class="t" style="left:1289px;top:543.87px;font-size:11.5px;color:#000;">3</div>
<div class="t" style="left:1349px;top:543.87px;font-size:11.5px;color:#000;">F1</div>
<div style="left:700px;top:581px;width:729px;height:1px;background:#ececec"></div>
<div class="t" style="left:728.8px;top:565.87px;font-size:11.5px;color:#000;transform:scaleX(0.9065);transform-origin:0 0;">1207</div>
<div class="t" style="left:789px;top:565.87px;font-size:11.5px;color:#000;transform:scaleX(0.8767);transform-origin:0 0;">ESALDEIDE</div>
<div class="t" style="left:1289px;top:565.87px;font-size:11.5px;color:#000;">3</div>
<div class="t" style="left:1349px;top:565.87px;font-size:11.5px;color:#000;">F1</div>
<div style="left:700px;top:603px;width:729px;height:1px;background:#ececec"></div>
<div class="t" style="left:728.8px;top:587.87px;font-size:11.5px;color:#000;transform:scaleX(0.9065);transform-origin:0 0;">1208</div>
<div class="t" style="left:789px;top:587.87px;font-size:11.5px;color:#000;transform:scaleX(0.9054);transform-origin:0 0;">ESANI</div>
<div class="t" style="left:1289px;top:587.87px;font-size:11.5px;color:#000;">3</div>
<div class="t" style="left:1349px;top:587.87px;font-size:11.5px;color:#000;">F1</div>
<div style="left:700px;top:625px;width:729px;height:1px;background:#ececec"></div>
<div class="t" style="left:728.8px;top:609.87px;font-size:11.5px;color:#000;transform:scaleX(0.9065);transform-origin:0 0;">1210</div>
<div class="t" style="left:789px;top:609.87px;font-size:11.5px;color:#000;transform:scaleX(0.9683);transform-origin:0 0;">INCHIOSTRI DA STAMPA INFIAMMABILI O MATERIE SIMILI AGLI INCHIOSTRI DA STAMPA (C...</div>
<div class="t" style="left:1289px;top:609.87px;font-size:11.5px;color:#000;">3</div>
<div class="t" style="left:1349px;top:609.87px;font-size:11.5px;color:#000;">F1</div>
<div style="left:700px;top:647px;width:729px;height:1px;background:#ececec"></div>
<div class="t" style="left:728.8px;top:631.87px;font-size:11.5px;color:#000;transform:scaleX(0.9065);transform-origin:0 0;">1210</div>
<div class="t" style="left:789px;top:631.87px;font-size:11.5px;color:#000;transform:scaleX(0.9682);transform-origin:0 0;">INCHIOSTRI DA STAMPA INFIAMMABILI O MATERIE SIMILI AGLI INCHIOSTRI DA STAMPA  (...</div>
<div class="t" style="left:1289px;top:631.87px;font-size:11.5px;color:#000;">3</div>
<div class="t" style="left:1349px;top:631.87px;font-size:11.5px;color:#000;">F1</div>
<div style="left:700px;top:669px;width:729px;height:1px;background:#ececec"></div>
<div class="t" style="left:728.8px;top:653.87px;font-size:11.5px;color:#000;transform:scaleX(0.9065);transform-origin:0 0;">1210</div>
<div class="t" style="left:789px;top:653.87px;font-size:11.5px;color:#000;transform:scaleX(0.9669);transform-origin:0 0;">INCHIOSTRI DA STAMPA, INFIAMMABILI O MATERIE SIMILI AGLI INCHIOSTRI DA STAMPA (...</div>
<div class="t" style="left:1289px;top:653.87px;font-size:11.5px;color:#000;">3</div>
<div class="t" style="left:1349px;top:653.87px;font-size:11.5px;color:#000;">F1</div>
<div style="left:700px;top:691px;width:729px;height:1px;background:#ececec"></div>
<div class="t" style="left:728.8px;top:675.87px;font-size:11.5px;color:#000;transform:scaleX(0.9065);transform-origin:0 0;">1210</div>
<div class="t" style="left:789px;top:675.87px;font-size:11.5px;color:#000;transform:scaleX(0.9669);transform-origin:0 0;">INCHIOSTRI DA STAMPA, INFIAMMABILI O MATERIE SIMILI AGLI INCHIOSTRI DA STAMPA (...</div>
<div class="t" style="left:1289px;top:675.87px;font-size:11.5px;color:#000;">3</div>
<div class="t" style="left:1349px;top:675.87px;font-size:11.5px;color:#000;">F1</div>
<div style="left:700px;top:713px;width:729px;height:1px;background:#ececec"></div>
<div class="t" style="left:728.8px;top:697.87px;font-size:11.5px;color:#000;transform:scaleX(0.9065);transform-origin:0 0;">1210</div>
<div class="t" style="left:789px;top:697.87px;font-size:11.5px;color:#000;transform:scaleX(0.9683);transform-origin:0 0;">INCHIOSTRI DA STAMPA INFIAMMABILI O MATERIE SIMILI AGLI INCHIOSTRI DA STAMPA (C...</div>
<div class="t" style="left:1289px;top:697.87px;font-size:11.5px;color:#000;">3</div>
<div class="t" style="left:1349px;top:697.87px;font-size:11.5px;color:#000;">F1</div>
<div style="left:700px;top:735px;width:729px;height:1px;background:#ececec"></div>
<div class="t" style="left:728.8px;top:719.87px;font-size:11.5px;color:#000;transform:scaleX(0.9065);transform-origin:0 0;">1210</div>
<div class="t" style="left:789px;top:719.87px;font-size:11.5px;color:#000;transform:scaleX(0.9683);transform-origin:0 0;">INCHIOSTRI DA STAMPA INFIAMMABILI O MATERIE SIMILI AGLI INCHIOSTRI DA STAMPA (C...</div>
<div class="t" style="left:1289px;top:719.87px;font-size:11.5px;color:#000;">3</div>
<div class="t" style="left:1349px;top:719.87px;font-size:11.5px;color:#000;">F1</div>
<div style="left:700px;top:757px;width:729px;height:1px;background:#ececec"></div>
<div class="t" style="left:728.8px;top:741.87px;font-size:11.5px;color:#000;transform:scaleX(0.9065);transform-origin:0 0;">1212</div>
<div class="t" style="left:789px;top:741.87px;font-size:11.5px;color:#000;transform:scaleX(0.9552);transform-origin:0 0;">ISOBUTANOLO (ALCOOL ISOBUTILICO )</div>
<div class="t" style="left:1289px;top:741.87px;font-size:11.5px;color:#000;">3</div>
<div class="t" style="left:1349px;top:741.87px;font-size:11.5px;color:#000;">F1</div>
<div style="left:700px;top:779px;width:729px;height:1px;background:#ececec"></div>
<div class="t" style="left:728.8px;top:763.87px;font-size:11.5px;color:#000;transform:scaleX(0.9065);transform-origin:0 0;">1213</div>
<div class="t" style="left:789px;top:763.87px;font-size:11.5px;color:#000;transform:scaleX(0.9052);transform-origin:0 0;">ACETATO DI ISOBUTILE</div>
<div class="t" style="left:1289px;top:763.87px;font-size:11.5px;color:#000;">3</div>
<div class="t" style="left:1349px;top:763.87px;font-size:11.5px;color:#000;">F1</div>
<div style="left:700px;top:801px;width:729px;height:1px;background:#ececec"></div>
<div class="t" style="left:728.8px;top:785.87px;font-size:11.5px;color:#000;transform:scaleX(0.9065);transform-origin:0 0;">1214</div>
<div class="t" style="left:789px;top:785.87px;font-size:11.5px;color:#000;transform:scaleX(0.9847);transform-origin:0 0;">ISOBUTILAMMINA</div>
<div class="t" style="left:1289px;top:785.87px;font-size:11.5px;color:#000;">3</div>
<div class="t" style="left:1349px;top:785.87px;font-size:11.5px;color:#000;">FC</div>
<div style="left:700px;top:823px;width:729px;height:1px;background:#ececec"></div>
<div class="t" style="left:728.8px;top:807.87px;font-size:11.5px;color:#000;transform:scaleX(0.9065);transform-origin:0 0;">1216</div>
<div class="t" style="left:789px;top:807.87px;font-size:11.5px;color:#000;transform:scaleX(0.8728);transform-origin:0 0;">ISOOTTENE</div>
<div class="t" style="left:1289px;top:807.87px;font-size:11.5px;color:#000;">3</div>
<div class="t" style="left:1349px;top:807.87px;font-size:11.5px;color:#000;">F1</div>
<div style="left:700px;top:845px;width:729px;height:1px;background:#ececec"></div>
<div class="t" style="left:728.8px;top:829.87px;font-size:11.5px;color:#000;transform:scaleX(0.9065);transform-origin:0 0;">1218</div>
<div class="t" style="left:789px;top:829.87px;font-size:11.5px;color:#000;transform:scaleX(0.9063);transform-origin:0 0;">ISOPRENE STABILIZZATO</div>
<div class="t" style="left:1289px;top:829.87px;font-size:11.5px;color:#000;">3</div>
<div class="t" style="left:1349px;top:829.87px;font-size:11.5px;color:#000;">F1</div>
<div style="left:700px;top:867px;width:729px;height:1px;background:#ececec"></div>
<div class="t" style="left:728.8px;top:851.87px;font-size:11.5px;color:#000;transform:scaleX(0.9065);transform-origin:0 0;">1219</div>
<div class="t" style="left:789px;top:851.87px;font-size:11.5px;color:#000;transform:scaleX(0.9540);transform-origin:0 0;">ISOPROPANOLO (ALCOOL ISOPROPILICO)</div>
<div class="t" style="left:1289px;top:851.87px;font-size:11.5px;color:#000;">3</div>
<div class="t" style="left:1349px;top:851.87px;font-size:11.5px;color:#000;">F1</div>
<div style="left:700px;top:889px;width:729px;height:1px;background:#ececec"></div>
<div class="t" style="left:728.8px;top:873.87px;font-size:11.5px;color:#000;transform:scaleX(0.9065);transform-origin:0 0;">1220</div>
<div class="t" style="left:789px;top:873.87px;font-size:11.5px;color:#000;transform:scaleX(0.9067);transform-origin:0 0;">ACETATO DI ISOPROPILE</div>
<div class="t" style="left:1289px;top:873.87px;font-size:11.5px;color:#000;">3</div>
<div class="t" style="left:1349px;top:873.87px;font-size:11.5px;color:#000;">F1</div>
<div style="left:700px;top:911px;width:729px;height:1px;background:#ececec"></div>
<div class="t" style="left:728.8px;top:895.87px;font-size:11.5px;color:#000;transform:scaleX(0.9065);transform-origin:0 0;">1221</div>
<div class="t" style="left:789px;top:895.87px;font-size:11.5px;color:#000;transform:scaleX(0.9838);transform-origin:0 0;">ISOPROPILAMMINA</div>
<div class="t" style="left:1289px;top:895.87px;font-size:11.5px;color:#000;">3</div>
<div class="t" style="left:1349px;top:895.87px;font-size:11.5px;color:#000;">FC</div>
<div style="left:1430px;top:361px;width:16px;height:549px;background:#f0f0f0"></div>
<div style="left:1431px;top:378px;width:14px;height:112px;background:#cdcdcd"></div>
<svg style="position:absolute;left:1433px;top:366px" width="10" height="8" viewBox="0 0 10 8"><path d="M1 6l4-4 4 4" fill="none" stroke="#555" stroke-width="2.2"/></svg>
<svg style="position:absolute;left:1433px;top:899px" width="10" height="8" viewBox="0 0 10 8"><path d="M1 2l4 4 4-4" fill="none" stroke="#555" stroke-width="2.2"/></svg>
<div style="left:700px;top:913px;width:730px;height:15px;background:#f0f0f0"></div>
<div style="left:717px;top:913px;width:153px;height:15px;background:#cdcdcd"></div>
<svg style="position:absolute;left:704px;top:916px" width="8" height="10" viewBox="0 0 8 10"><path d="M6 1L2 5l4 4" fill="none" stroke="#555" stroke-width="2.2"/></svg>
<svg style="position:absolute;left:1416px;top:916px" width="8" height="10" viewBox="0 0 8 10"><path d="M2 1l4 4-4 4" fill="none" stroke="#555" stroke-width="2.2"/></svg>
<div style="left:1430px;top:911px;width:16px;height:17px;background:#f0f0f0"></div>
<div style="left:700px;top:361px;width:1px;height:550px;background:#f0f0f0"></div>
<div style="left:1460px;top:275px;width:232px;height:59px;box-sizing:border-box;border:1.5px solid #000;background:#acacac"></div>
<svg style="position:absolute;left:1465px;top:281px" width="50" height="49" viewBox="0 0 50 49"><rect x="8" y="3" width="35" height="43" fill="#3a74b8"/><rect x="12" y="6" width="28" height="37" fill="#fff"/><path d="M17 14.5h15M17 17.5h15M17 20.5h10M17 25.5h19M17 28.5h19M17 31.5h19M17 34.5h19M17 37.5h14" stroke="#8a8a8a" stroke-width="1"/><path d="M8 11h4M8 17h4M8 23h4" stroke="#fff" stroke-width="2"/><g stroke="#e8a93e" stroke-width="1.6"><path d="M41.5 1.5v14M34.5 8.5h14M36.5 3.5l10 10M46.5 3.5l-10 10"/></g><circle cx="41.5" cy="8.5" r="2.6" fill="#e8a93e"/><circle cx="41.5" cy="8.5" r="1" fill="#3a74b8"/><circle cx="13" cy="36.5" r="13" fill="#9a9a9a"/><circle cx="13" cy="36.5" r="12" fill="#e8b35c"/><path d="M13 36.5L7 26.1a12 12 0 0 0-6 10.4zM13 36.5l6-10.4a12 12 0 0 1 6 10.4zM13 36.5l6 10.4a12 12 0 0 1-12 0z" fill="#444"/></svg>
<div class="t" style="left:1514px;top:299.87px;font-size:11.5px;color:#f4f4f4;font-weight:700;">Compila Tremcards Materia</div>
<div style="left:1460px;top:341px;width:232px;height:60px;box-sizing:border-box;border:1.5px solid #000;background:#acacac"></div>
<svg style="position:absolute;left:1469px;top:350px" width="41" height="41" viewBox="0 0 41 41"><circle cx="20.5" cy="20.5" r="20" fill="#cc4a32"/><path d="M12 12l17 17M29 12L12 29" stroke="#fff" stroke-width="5"/></svg>
<div class="t" style="left:1514px;top:366.37px;font-size:11.5px;color:#f4f4f4;font-weight:700;">Annulla ricerca</div>
<div style="left:1460px;top:873px;width:232px;height:61px;box-sizing:border-box;border:1.5px solid #000;background:#acacac"></div>
<svg style="position:absolute;left:1469px;top:883px" width="41" height="41" viewBox="0 0 41 41"><circle cx="20.5" cy="20.5" r="20" fill="#3a74b8"/><path d="M13.5 15.5a7 7 0 1 1 10 6.3c-2 1-3 2.5-3 4.5v2" fill="none" stroke="#fff" stroke-width="4.5"/><rect x="18" y="31" width="5" height="5" fill="#fff"/></svg>
<div class="t" style="left:1514px;top:898.87px;font-size:11.5px;color:#f4f4f4;font-weight:700;">Guida in linea</div>
<div style="left:1463px;top:410px;width:227px;height:219px;box-sizing:border-box;border:1px solid #c8c8c8;border-radius:3px;background:#f0f0f0"></div>
<div style="left:1464px;top:411px;width:225px;height:34px;border-radius:3px 3px 0 0;background:linear-gradient(#feb042,#fde4be);border-bottom:1px solid #d0d0d0"></div>
<svg style="position:absolute;left:1468px;top:414px" width="16" height="16" viewBox="0 0 16 16"><circle cx="8" cy="8" r="7.5" fill="#e8b35c"/><path d="M8 8L4 1a8 8 0 0 0-4 7zM8 8l4-7a8 8 0 0 1 4 7zM8 8l4 7a8 8 0 0 1-8 0z" fill="#3c3c3c"/></svg>
<div class="t" style="left:1490px;top:417.37px;font-size:11.5px;color:#000;font-weight:700;">Dati materia</div>
<div class="t" style="left:1468px;top:452.91px;font-size:10.6px;color:#000;transform:scaleX(1.0376);transform-origin:0 0;"><b>ONU [1]</b>: 1202</div>
<div class="t" style="left:1468px;top:464.81px;font-size:10.6px;color:#000;transform:scaleX(0.9993);transform-origin:0 0;"><b>Classe [3a]</b>: <u style="color:#2662c4">3</u></div>
<div class="t" style="left:1468px;top:478.81px;font-size:10.6px;color:#000;transform:scaleX(0.9897);transform-origin:0 0;"><b>Denominazione [2]</b>: CARBURANTE DIESEL</div>
<div class="t" style="left:1468px;top:490.81px;font-size:10.6px;color:#000;transform:scaleX(1.0058);transform-origin:0 0;">O GASOLIO O OLIO DA RISCALDAMENTO</div>
<div class="t" style="left:1468px;top:504.81px;font-size:10.6px;color:#000;transform:scaleX(0.9889);transform-origin:0 0;">LEGGERO (PUNTO D'INFIAMMABILITÀ</div>
<div class="t" style="left:1468px;top:516.71px;font-size:10.6px;color:#000;transform:scaleX(0.9726);transform-origin:0 0;">COMPRESO TRA 60°C E 100°C)</div>
<div class="t" style="left:1468px;top:530.81px;font-size:10.6px;color:#000;transform:scaleX(0.9937);transform-origin:0 0;"><b>Codice classificazione [3b]</b>: F1</div>
<div class="t" style="left:1468px;top:542.91px;font-size:10.6px;color:#000;transform:scaleX(1.0170);transform-origin:0 0;"><b>G.I. [4]</b>: III</div>
<div class="t" style="left:1468px;top:556.71px;font-size:10.6px;color:#000;transform:scaleX(1.0184);transform-origin:0 0;"><b>Disposizioni speciali [6]</b>: 640M;664</div>
<div class="t" style="left:1468px;top:568.61px;font-size:10.6px;color:#000;transform:scaleX(1.0430);transform-origin:0 0;"><b>Quantità limitate [7a]</b>: 5 L</div>
<div class="t" style="left:1468px;top:582.61px;font-size:10.6px;color:#000;transform:scaleX(1.0242);transform-origin:0 0;"><b>Quantità esenti [7b]</b>: E1</div>
<div class="t" style="left:1468px;top:594.81px;font-size:10.6px;color:#000;transform:scaleX(1.0158);transform-origin:0 0;"><b>Codice restrizione galleria [15a]</b>: D/E</div>
<div class="t" style="left:1468px;top:608.61px;font-size:10.6px;color:#000;transform:scaleX(1.0333);transform-origin:0 0;"><b>Kemler [20]</b>: <u style="color:#2662c4">30</u></div>
</body></html>
